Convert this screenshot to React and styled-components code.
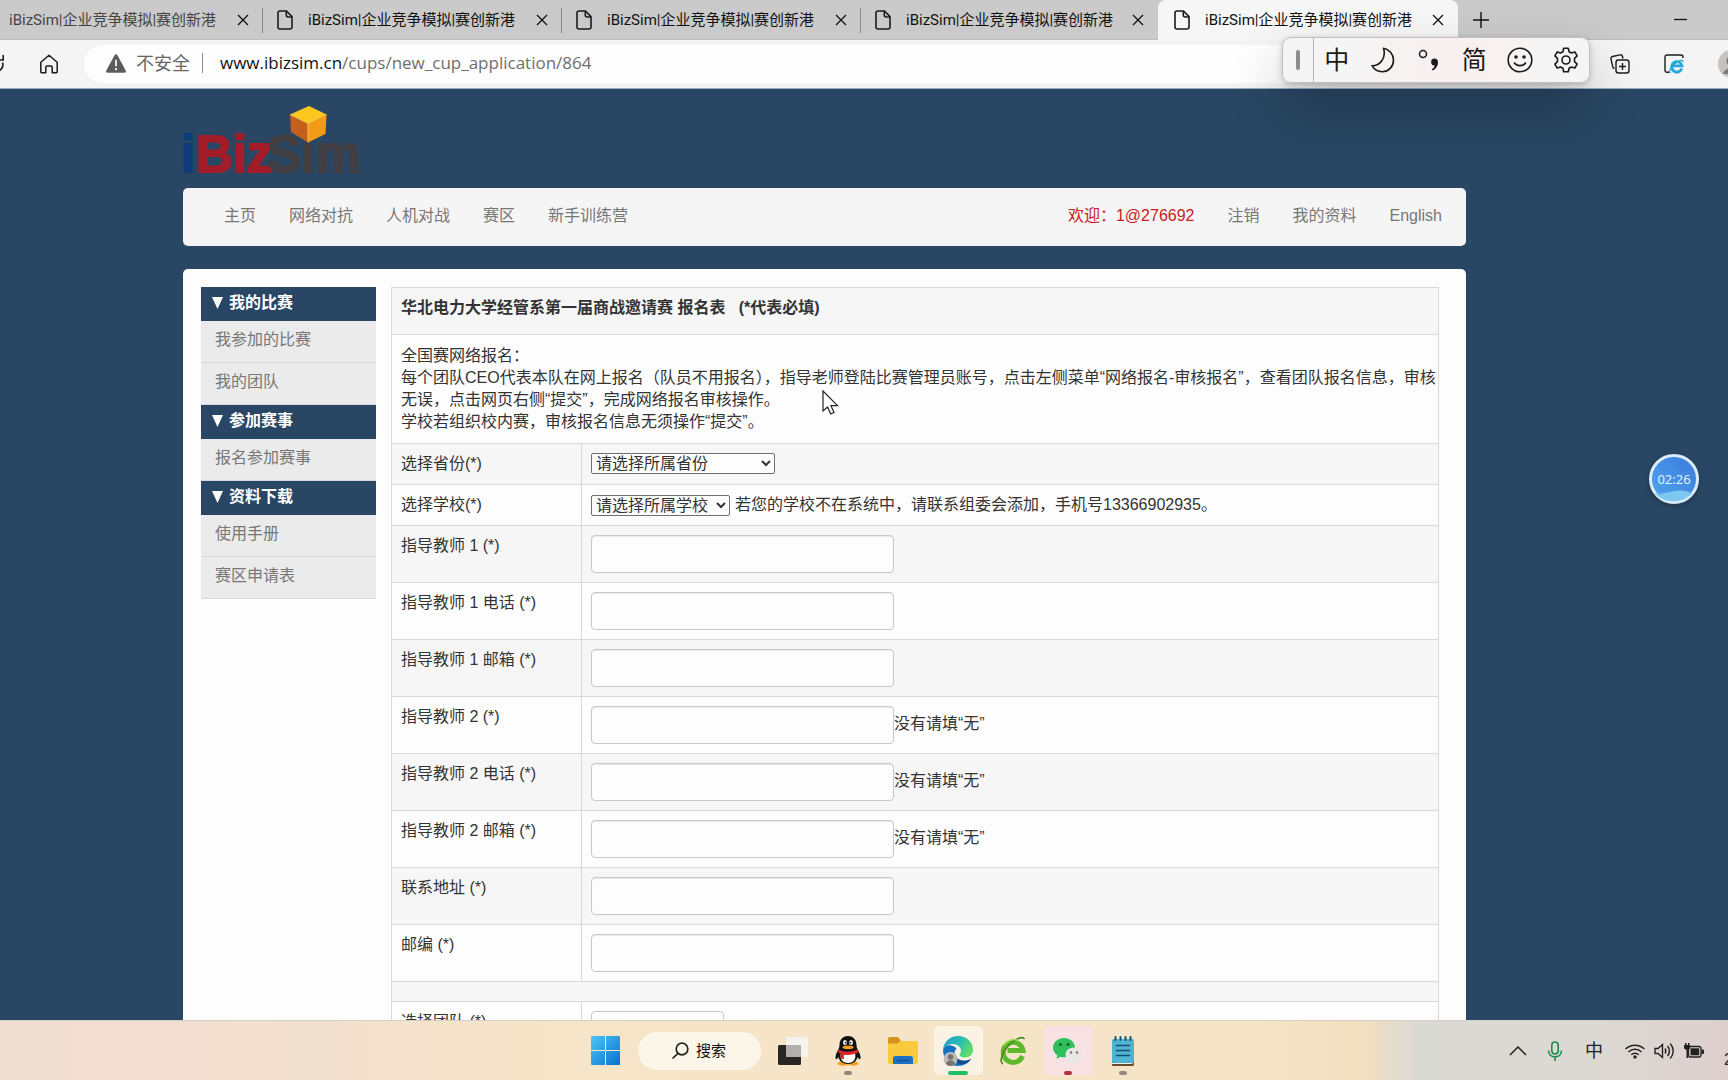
import styled, { createGlobalStyle } from "styled-components";

const TAB_TITLE = "iBizSim|企业竞争模拟|赛创新港";

const tabs = [
  { id: 1, first: true },
  { id: 2 },
  { id: 3 },
  { id: 4, last: true },
  { id: 5, active: true },
];

const leftLinks = ["主页", "网络对抗", "人机对战", "赛区", "新手训练营"];
const rightLinks = ["注销", "我的资料", "English"];

const menu = [
  { title: "我的比赛", items: ["我参加的比赛", "我的团队"] },
  { title: "参加赛事", items: ["报名参加赛事"] },
  { title: "资料下载", items: ["使用手册", "赛区申请表"] },
];

const fields = [
  { id: "teacher1", label: "指导教师 1 (*)" },
  { id: "teacher1_phone", label: "指导教师 1 电话 (*)" },
  { id: "teacher1_mail", label: "指导教师 1 邮箱 (*)" },
  { id: "teacher2", label: "指导教师 2 (*)", note: "没有请填“无”" },
  { id: "teacher2_phone", label: "指导教师 2 电话 (*)", note: "没有请填“无”" },
  { id: "teacher2_mail", label: "指导教师 2 邮箱 (*)", note: "没有请填“无”" },
  { id: "address", label: "联系地址 (*)" },
  { id: "zip", label: "邮编 (*)" },
];

const CloseIcon = () => (
  <svg width="12" height="12" viewBox="0 0 12 12" stroke="currentColor" strokeWidth="1.3">
    <path d="M1 1l10 10M11 1L1 11" />
  </svg>
);

const FileIcon = () => (
  <svg width="16" height="20" viewBox="0 0 16 20" fill="none" stroke="#1b1b1b" strokeWidth="1.6">
    <path d="M3 1h6.5L15 6.6V17a2 2 0 0 1-2 2H3a2 2 0 0 1-2-2V3a2 2 0 0 1 2-2z" />
    <path d="M9.3 1.2V5a2 2 0 0 0 2 2h3.5" />
  </svg>
);

const BrowserTabs = () => (
  <TabStrip role="tablist">
    {tabs.map((tab) => (
      <Tab
        key={tab.id}
        role="tab"
        aria-selected={!!tab.active}
        $active={tab.active}
        $first={tab.first}
        $last={tab.last}
      >
        {!tab.first && <FileIcon />}
        <TabTitle $dim={tab.first}>{TAB_TITLE}</TabTitle>
        <IconButton aria-label="关闭标签页">
          <CloseIcon />
        </IconButton>
      </Tab>
    ))}
    <NewTab aria-label="新建标签页">
      <svg width="18" height="18" viewBox="0 0 18 18" stroke="#111" strokeWidth="1.4">
        <path d="M9 1v16M1 9h16" />
      </svg>
    </NewTab>
    <Minimize aria-label="最小化">
      <svg width="13" height="3" viewBox="0 0 13 3" stroke="#111" strokeWidth="1.3">
        <path d="M0 1.5h13" />
      </svg>
    </Minimize>
  </TabStrip>
);

const BrowserToolbar = () => (
  <Toolbar>
    <IconButton aria-label="刷新">
      <svg width="5" height="20" viewBox="0 0 5 20" fill="none" stroke="#1b1b1b" strokeWidth="1.6">
        <path d="M3.2 1v5H0M2.500 8.500c1 3.500-.5 6.500-3 8" />
      </svg>
    </IconButton>
    <HomeButton aria-label="主页">
      <svg width="20" height="20" viewBox="0 0 20 20" fill="none" stroke="#1b1b1b" strokeWidth="1.5" strokeLinejoin="round">
        <path d="M1.8 8.3 10 1.3l8.200 7V18a.8.8 0 0 1-.8.8h-4.200v-5.500a1.200 1.200 0 0 0-1.200-1.200H8a1.200 1.200 0 0 0-1.200 1.200v5.500H2.600a.8.8 0 0 1-.8-.8z" />
      </svg>
    </HomeButton>
    <AddressBar>
      <svg width="20" height="19" viewBox="0 0 20 19">
        <path d="M8.7 1a1.500 1.500 0 0 1 2.600 0l8.400 15.500a1.500 1.500 0 0 1-1.300 2.300H1.600a1.500 1.500 0 0 1-1.300-2.300z" fill="#5b5b5b" />
        <path d="M10 5.800v6.400" stroke="#fff" strokeWidth="1.7" />
        <circle cx="10" cy="15.200" r="1.1" fill="#fff" />
      </svg>
      <Insecure>不安全</Insecure>
      <Url>
        <b>www.ibizsim.cn</b>/cups/new_cup_application/864
      </Url>
    </AddressBar>
    <ToolbarRight>
      <IconButton aria-label="集锦">
        <svg width="20" height="20" viewBox="0 0 20 20" fill="none" stroke="#1b1b1b" strokeWidth="1.4">
          <path d="M4.500 14.500 3 13.800 1 5a2 2 0 0 1 1.500-2.500L10 .9A2 2 0 0 1 12.500 2.500l.5 2" />
          <rect x="6" y="6" width="13" height="13" rx="2.5" />
          <path d="M12.500 9v7M9 12.500h7" />
        </svg>
      </IconButton>
      <IconButton aria-label="IE 模式">
        <svg width="20" height="20" viewBox="0 0 20 20" fill="none">
          <path d="M5 18.300H3a2 2 0 0 1-2-2V3a2 2 0 0 1 2-2h14a2 2 0 0 1 2 2v1" stroke="#1b1b1b" strokeWidth="1.4" />
          <path d="M17.800 14.500A5.200 5.200 0 1 1 18 11.800H8.800" stroke="#27a9d8" strokeWidth="2.8" />
          <path d="M7 18.500c-3 .5-1-4.500 3-8s9.500-6 9-2.500" stroke="#27a9d8" strokeWidth="1.2" />
        </svg>
      </IconButton>
      <IconButton aria-label="用户">
        <svg width="10" height="28" viewBox="0 0 10 28">
          <circle cx="14" cy="14" r="14" fill="#c6c2bf" />
          <circle cx="14" cy="11" r="5.5" fill="#7c7673" />
          <path d="M5 24c1-8 17-8 18 0z" fill="#7c7673" />
        </svg>
      </IconButton>
    </ToolbarRight>
  </Toolbar>
);

const ImeBar = () => (
  <Ime>
    <ImeHandle />
    <ImeButton>中</ImeButton>
    <ImeButton aria-label="半角">
      <svg width="24" height="26" viewBox="0 0 24 26" fill="none" stroke="#1a1a1a" strokeWidth="1.6" strokeLinejoin="round">
        <path d="M12.500 1.200c5.500 1 10 6 10 12 0 6.500-5 11.500-11 11.500-4.500 0-8.500-2.300-10.500-6 8 0 14.500-7.500 11.500-17.500z" />
      </svg>
    </ImeButton>
    <ImeButton aria-label="中文标点">
      <svg width="22" height="24" viewBox="0 0 22 24">
        <circle cx="5" cy="6" r="3.5" fill="none" stroke="#1a1a1a" strokeWidth="1.5" />
        <path d="M16.500 10.500a3.500 3.500 0 0 1 3.500 3.700c0 4-2.500 7-5.500 8.300l-.7-1.200c1.700-1 2.800-2.300 3-3.800a3.500 3.500 0 0 1-.3-7z" fill="#1a1a1a" />
      </svg>
    </ImeButton>
    <ImeButton>简</ImeButton>
    <ImeButton aria-label="表情">
      <svg width="26" height="26" viewBox="0 0 26 26" fill="none" stroke="#1a1a1a" strokeWidth="1.6">
        <circle cx="13" cy="13" r="11.8" />
        <path d="M7.500 16c2.300 3.500 8.700 3.500 11 0" strokeLinecap="round" />
        <circle cx="9" cy="10" r="1" fill="#1a1a1a" />
        <circle cx="17" cy="10" r="1" fill="#1a1a1a" />
      </svg>
    </ImeButton>
    <ImeButton aria-label="设置">
      <svg width="26" height="26" viewBox="0 0 26 26" fill="none" stroke="#1a1a1a" strokeWidth="1.6" strokeLinejoin="round">
        <path d="M10.700 1.300h4.600l.8 3.400 2.300 1.300 3.400-1.100 2.300 4-2.600 2.500v3.200l2.600 2.500-2.300 4-3.400-1.100-2.300 1.300-.8 3.400h-4.600l-.8-3.400L7.600 20l-3.400 1.100-2.300-4 2.600-2.500v-3.200L1.900 8.900l2.300-4L7.600 6l2.300-1.300z" />
        <circle cx="13" cy="13" r="4" />
      </svg>
    </ImeButton>
  </Ime>
);

const Logo = () => (
  <LogoLink href="#" aria-label="iBizSim">
    <svg width="200" height="84" viewBox="-4 0 200 84">
      <g fontFamily="Liberation Sans, sans-serif" fontWeight="bold" fontSize="51" strokeWidth="2">
        <text x="-2" y="68" fill="#0d3c78" stroke="#0d3c78">i</text>
        <text x="13" y="68" fill="#a31d28" stroke="#a31d28">Biz</text>
        <text x="84" y="68" fill="#413f43" stroke="#413f43">Sim</text>
      </g>
      <path d="M107 10.500 126 2l17.500 8.500L125 19.500z" fill="#fcc61e" />
      <path d="M107 10.500 125 19.500V38.500L108 28z" fill="#c4601b" />
      <path d="M143.500 10.500 125 19.500v19L142.500 30z" fill="#f39a16" />
      <path d="M107 10.500 125 19.500l18.500-9M125 19.500v19" fill="none" stroke="#fbd25a" strokeWidth="0.8" />
    </svg>
  </LogoLink>
);

const SiteNav = () => (
  <NavBar>
    <NavGroup>
      {leftLinks.map((text) => (
        <NavLink key={text} href="#">
          {text}
        </NavLink>
      ))}
    </NavGroup>
    <NavGroup>
      <Welcome>欢迎：1@276692</Welcome>
      {rightLinks.map((text) => (
        <NavLink key={text} href="#">
          {text}
        </NavLink>
      ))}
    </NavGroup>
  </NavBar>
);

const SideMenu = () => (
  <Sidebar>
    {menu.map((group) => (
      <section key={group.title}>
        <MenuTitle>
          <svg width="11" height="12" viewBox="0 0 11 12">
            <path d="M0 0h11L5.500 12z" fill="#fff" />
          </svg>
          {group.title}
        </MenuTitle>
        {group.items.map((item) => (
          <MenuItem key={item} href="#">
            {item}
          </MenuItem>
        ))}
      </section>
    ))}
  </Sidebar>
);

const ApplicationForm = () => (
  <FormTable>
    <colgroup>
      <LabelCol />
      <col />
    </colgroup>
    <tbody>
      <tr>
        <TitleCell colSpan={2}>
          华北电力大学经管系第一届商战邀请赛 报名表 &nbsp; (*代表必填)
        </TitleCell>
      </tr>
      <tr>
        <NoticeCell colSpan={2}>
          全国赛网络报名：
          <br />
          每个团队CEO代表本队在网上报名（队员不用报名），指导老师登陆比赛管理员账号，点击左侧菜单“网络报名-审核报名”，查看团队报名信息，审核
          无误，点击网页右侧“提交”，完成网络报名审核操作。
          <br />
          学校若组织校内赛，审核报名信息无须操作“提交”。
        </NoticeCell>
      </tr>
      <tr>
        <Cell>
          <label htmlFor="province">选择省份(*)</label>
        </Cell>
        <Cell>
          <FieldLine>
            <PlainSelect id="province" $width={184}>
              <option>请选择所属省份</option>
            </PlainSelect>
          </FieldLine>
        </Cell>
      </tr>
      <tr>
        <Cell>
          <label htmlFor="school">选择学校(*)</label>
        </Cell>
        <Cell>
          <FieldLine $gap={5}>
            <PlainSelect id="school" $width={139}>
              <option>请选择所属学校</option>
            </PlainSelect>
            若您的学校不在系统中，请联系组委会添加，手机号13366902935。
          </FieldLine>
        </Cell>
      </tr>
      {fields.map((field) => (
        <tr key={field.id}>
          <Cell>
            <label htmlFor={field.id}>{field.label}</label>
          </Cell>
          <Cell>
            <FieldLine>
              <TextInput id={field.id} type="text" />
              {field.note && <Note>{field.note}</Note>}
            </FieldLine>
          </Cell>
        </tr>
      ))}
      <tr>
        <SpacerCell colSpan={2} />
      </tr>
      <tr>
        <Cell>
          <label htmlFor="team">选择团队 (*)</label>
        </Cell>
        <Cell>
          <TeamSelect id="team" />
        </Cell>
      </tr>
    </tbody>
  </FormTable>
);

const Taskbar = () => (
  <Bar>
    <span />
    <Apps>
      <AppButton aria-label="开始">
        <svg width="29" height="29" viewBox="0 0 29 29">
          <defs>
            <linearGradient id="win" x1="0" y1="0" x2="1" y2="1">
              <stop offset="0" stopColor="#4cc8f6" />
              <stop offset="1" stopColor="#0a6fd0" />
            </linearGradient>
          </defs>
          <path d="M1 0h13v14H0V1a1 1 0 0 1 1-1zM15 0h13a1 1 0 0 1 1 1v13H15zM0 15h14v14H1a1 1 0 0 1-1-1zM15 15h14v13a1 1 0 0 1-1 1H15z" fill="url(#win)" />
        </svg>
      </AppButton>
      <SearchButton>
        <svg width="17" height="17" viewBox="0 0 17 17" fill="none" stroke="#222" strokeWidth="1.7">
          <circle cx="10" cy="7" r="5.8" />
          <path d="M6 11.300 1 16" strokeLinecap="round" />
        </svg>
        搜索
      </SearchButton>
      <AppButton aria-label="任务视图">
        <svg width="30" height="28" viewBox="0 0 30 28">
          <rect x="0" y="8" width="23" height="20" rx="1.5" fill="#272625" />
          <rect x="8" y="0" width="22" height="20" rx="1.5" fill="#f5f3f0" />
          <path d="M8 8h15v12H9.500A1.500 1.500 0 0 1 8 18.500z" fill="#b2b0ad" />
        </svg>
      </AppButton>
      <AppButton aria-label="QQ" $mark="#94887a">
        <svg width="26" height="30" viewBox="0 0 26 30">
          <ellipse cx="8" cy="27.5" rx="5.5" ry="2.2" fill="#f4a01c" />
          <ellipse cx="18" cy="27.5" rx="5.5" ry="2.2" fill="#f4a01c" />
          <path d="M13 0c5.500 0 8.500 4 8.500 9 0 2 .5 3 1.500 5 1.500 3 3 6 2.500 8.500-.5 1.500-2 .5-3-1.500-.8 4-4 7-9.500 7s-8.700-3-9.500-7c-1 2-2.500 3-3 1.500C0 20 1.500 17 3 14c1-2 1.500-3 1.500-5C4.500 4 7.500 0 13 0z" fill="#111" />
          <path d="M6 17h14c1.500 6-1.500 10-7 10s-8.500-4-7-10z" fill="#fff" />
          <ellipse cx="10" cy="6.5" rx="1.9" ry="2.6" fill="#fff" />
          <ellipse cx="16" cy="6.5" rx="1.9" ry="2.6" fill="#fff" />
          <circle cx="10.5" cy="6.7" r=".9" fill="#111" />
          <circle cx="15.5" cy="6.7" r=".9" fill="#111" />
          <ellipse cx="13" cy="11.3" rx="5.5" ry="1.9" fill="#f4a01c" />
          <path d="M3.500 13.500c6 3 13 3 19 0l.8 3c-3 1.500-7 2.500-10.300 2.500-1.500 0-3-.1-4-.3l-.2 4.500-3.300-.6.500-4.800-2.800-1.300z" fill="#e0262b" />
        </svg>
      </AppButton>
      <AppButton aria-label="文件资源管理器">
        <svg width="30" height="28" viewBox="0 0 30 28">
          <path d="M0 2a2 2 0 0 1 2-2h8l3 4h-1l-2 3H0z" fill="#d4931a" />
          <path d="M0 6.500h9.500L12.500 4H28a2 2 0 0 1 2 2v19a2 2 0 0 1-2 2H2a2 2 0 0 1-2-2z" fill="#f9c93e" />
          <path d="M5 27v-5.500A2.500 2.500 0 0 1 7.500 19h15a2.500 2.500 0 0 1 2.500 2.500V27z" fill="#1f6fc4" />
          <path d="M9 23.500h12" stroke="#174f96" strokeWidth="1.5" />
        </svg>
      </AppButton>
      <AppButton aria-label="Microsoft Edge" $tile="#faf3e3" $mark="#1fc068" $wide>
        <svg width="32" height="32" viewBox="0 0 32 32">
          <defs>
            <linearGradient id="edgeTop" x1="0" y1="0" x2="1" y2="0.5">
              <stop offset="0" stopColor="#2295cf" />
              <stop offset="0.6" stopColor="#2dc0b0" />
              <stop offset="1" stopColor="#5fdc69" />
            </linearGradient>
          </defs>
          <path d="M1 15c0 9 6.500 16 15 16 6 0 10.500-3 13-7-2.500 1.500-4.500 1.800-7 1.800-6 0-9.500-3.300-9.500-7.300 0-2 .7-3.500 2-5C12 10 3 8 1 15z" fill="#1572c0" />
          <path d="M12.500 18.500c-1 7 3 11.500 9 10.500 3.500-.7 6-2.500 7.500-5-8 4-15 .5-16.500-5.500z" fill="#134b91" />
          <path d="M16 1C8 1 1.500 7 1 15c2-4 5.500-6 9.500-6 5 0 8.500 3 8.500 7 0 2-1.500 3-1.500 4s2 2.500 5.500 2.500c4.500 0 8-3 8-8C31 7 24.500 1 16 1z" fill="url(#edgeTop)" />
          <circle cx="8.5" cy="24" r="7" fill="#bdbab6" />
          <circle cx="8.5" cy="22" r="2.8" fill="#77726e" />
          <path d="M4 29c.5-5 8.500-5 9 0-2 2.500-7 2.500-9 0z" fill="#77726e" />
        </svg>
      </AppButton>
      <AppButton aria-label="360安全浏览器">
        <svg width="28" height="30" viewBox="0 0 28 30" fill="none">
          <path d="M23.500 20A10 10 0 1 1 24 14.500H8.500" stroke="#5fb82c" strokeWidth="5" />
          <path d="M4 28c-4-2-1-12 6-19S24 0 25.500 3" stroke="#3c8c26" strokeWidth="1.6" />
          <path d="M4.500 9.500C8 4 14 2.500 18 4" stroke="#a9de5b" strokeWidth="1.4" />
        </svg>
      </AppButton>
      <AppButton aria-label="微信" $tile="#f8e2e4" $mark="#b0323a">
        <svg width="30" height="26" viewBox="0 0 30 26">
          <path d="M11 0c6 0 11 4.300 11 9.700s-5 9.600-11 9.600c-1.300 0-2.600-.2-3.700-.6L3.500 21l.8-3.800C1.600 15.500 0 12.700 0 9.700 0 4.300 5 0 11 0z" fill="#2dbf5c" />
          <circle cx="7.5" cy="6.5" r="1.5" fill="#145f2d" />
          <circle cx="15" cy="6.5" r="1.5" fill="#145f2d" />
          <path d="M21 9.500c4.800 0 8.500 3.300 8.500 7.300 0 2.300-1.200 4.300-3 5.700l.5 3-3-1.700c-1 .3-2 .4-3 .4-4.700 0-8.500-3.300-8.500-7.400s3.800-7.300 8.500-7.300z" fill="#e9e6e6" />
          <circle cx="18" cy="14.5" r="1.2" fill="#777" />
          <circle cx="24" cy="14.5" r="1.2" fill="#777" />
        </svg>
      </AppButton>
      <AppButton aria-label="记事本" $mark="#94887a">
        <svg width="22" height="30" viewBox="0 0 22 30">
          <path d="M0 26h22v2.500a1.500 1.500 0 0 1-1.500 1.500h-19A1.500 1.500 0 0 1 0 28.500z" fill="#6b4a2c" />
          <rect x="0" y="3" width="22" height="24" rx="1.5" fill="#4fb4d4" />
          <path d="M0 27h22l-3 1H0z" fill="#f4efe6" />
          <g stroke="#17506e" strokeWidth="2" strokeLinecap="round">
            <path d="M3.500 1v3M8.500 1v3M13.500 1v3M18.500 1v3" />
            <path d="M4.500 9.500h13M4.500 14.500h13M4.500 19.500h13" strokeWidth="1.7" />
          </g>
        </svg>
      </AppButton>
    </Apps>
    <Tray>
      <svg width="18" height="10" viewBox="0 0 18 10" fill="none" stroke="#222" strokeWidth="1.5">
        <path d="M1 9l8-8 8 8" />
      </svg>
      <svg width="16" height="20" viewBox="0 0 16 20" fill="none" stroke="#1f8a50" strokeWidth="1.6">
        <rect x="4.8" y="1" width="6.4" height="12" rx="3.2" />
        <path d="M1.500 9.500c0 4 2.800 6.300 6.500 6.300s6.500-2.300 6.500-6.300M8 16v4" />
      </svg>
      <ImeState>中</ImeState>
      <TrayStatus>
        <svg width="20" height="16" viewBox="0 0 20 16" fill="none" stroke="#222" strokeWidth="1.5">
          <path d="M.6 6a13.500 13.500 0 0 1 18.800 0M3.500 9a9.300 9.300 0 0 1 13 0M6.300 11.800a5.300 5.300 0 0 1 7.400 0" />
          <circle cx="10" cy="14" r="1.7" fill="#222" stroke="none" />
        </svg>
        <svg width="21" height="18" viewBox="0 0 21 18" fill="none" stroke="#222" strokeWidth="1.4">
          <path d="M1 6.500h3l4.500-4v13L4 11.500H1zM11 6.500c1 1.500 1 3.500 0 5M13.500 4c2.300 3 2.300 7 0 10M16.200 1.500c4 4.500 4 10.500 0 15" />
        </svg>
        <svg width="20" height="16" viewBox="0 0 20 16">
          <path d="M1 0h1.500v2H4V0h1.500v2H6v3.500L4.200 7v8H2.500V7L0 5.500V2h1z" fill="#222" />
          <rect x="4.5" y="3.5" width="12.5" height="10.5" rx="2" fill="none" stroke="#222" strokeWidth="1.3" />
          <rect x="6.5" y="5.3" width="8.7" height="7" fill="#222" />
          <path d="M17.500 6.500H19a1 1 0 0 1 1 1v2.500a1 1 0 0 1-1 1h-1.500z" fill="#222" />
        </svg>
      </TrayStatus>
      <TrayDate>2</TrayDate>
    </Tray>
  </Bar>
);

const App = () => {
  return (
    <Desktop lang="zh-CN">
      <GlobalStyle />
      <BrowserTabs />
      <BrowserToolbar />
      <Page>
        <Logo />
        <SiteNav />
        <Panel>
          <SideMenu />
          <ApplicationForm />
        </Panel>
      </Page>
      <Taskbar />
      <ImeBar />
      <Timer>
        <svg width="50" height="50" viewBox="0 0 50 50">
          <defs>
            <linearGradient id="ball" x1="0" y1="1" x2="1" y2="0">
              <stop offset="0" stopColor="#4fa8f0" />
              <stop offset="1" stopColor="#3b78dc" />
            </linearGradient>
          </defs>
          <circle cx="25" cy="25" r="23.5" fill="url(#ball)" stroke="#dcebfa" strokeWidth="3" />
          <path d="M6 39c7 2 13-1 20-2s11 0 17 2c-8 11-29 11-37 0z" fill="#7cc8f0" />
        </svg>
        <span>02:26</span>
      </Timer>
      <Pointer width="17" height="26" viewBox="0 0 17 26">
        <path d="M1 1v20l4.500-4 3.200 7 3.300-1.500-3-6.800h6.500z" fill="#fff" stroke="#222" strokeWidth="1.2" />
      </Pointer>
    </Desktop>
  );
};

const GlobalStyle = createGlobalStyle`
  * {
    box-sizing: border-box;
  }
  body {
    margin: 0;
    font-family: "Liberation Sans", "Noto Sans CJK SC", sans-serif;
    font-size: 16px;
    line-height: 22px;
    color: #333;
  }
  button {
    font: inherit;
    color: inherit;
    padding: 0;
    border: 0;
    background: none;
  }
  svg {
    display: block;
    flex: none;
  }
`;

const Desktop = styled.div`
  position: relative;
  display: flex;
  flex-direction: column;
  height: 100vh;
  overflow: hidden;
`;

const TabStrip = styled.div`
  display: flex;
  height: 40px;
  background: #cacaca;
  border-bottom: 1px solid #bdbdbd;
  font-family: Roboto, "Noto Sans CJK SC", sans-serif;
  font-size: 15px;
`;

const Tab = styled.div`
  display: flex;
  align-items: center;
  gap: 15px;
  flex: 0 1
    ${(props) =>
      props.$first ? 263 : props.$last ? 297 : props.$active ? 300 : 299}px;
  height: 40px;
  padding: 0 14px 0 ${(props) => (props.$first ? 9 : props.$active ? 16 : 14)}px;
  background: ${(props) =>
    props.$active
      ? "#f6f6f6"
      : props.$last
      ? "none"
      : "linear-gradient(#8a8a8a, #8a8a8a) right 8px / 1px 25px no-repeat"};
  border-radius: ${(props) => (props.$active ? "8px 8px 0 0" : 0)};
  color: #111;
`;

const TabTitle = styled.span`
  flex: 1;
  white-space: nowrap;
  overflow: hidden;
  color: ${(props) => (props.$dim ? "#444" : "#111")};
`;

const IconButton = styled.button`
  display: flex;
  align-items: center;
  cursor: pointer;
`;

const NewTab = styled(IconButton)`
  padding-left: 14px;
`;

const Minimize = styled(IconButton)`
  margin-left: auto;
  padding-right: 41px;
`;

const Toolbar = styled.div`
  display: flex;
  align-items: center;
  height: 49px;
  background: #f5f4f5;
  border-bottom: 1px solid #9aacc0;
`;

const HomeButton = styled(IconButton)`
  margin: 0 25px 0 34px;
`;

const AddressBar = styled.div`
  display: flex;
  align-items: center;
  flex: 1;
  height: 38px;
  margin-right: 30px;
  padding: 0 0 2px 22px;
  border-radius: 19px;
  background: #fefefe;
  font-family: "Open Sans", "Noto Sans CJK SC", sans-serif;
`;

const Insecure = styled.span`
  margin-left: 10px;
  padding-right: 12px;
  border-right: 1px solid #8b8b8b;
  font-size: 18px;
  line-height: 20px;
  color: #666;
`;

const Url = styled.span`
  margin-left: 17px;
  font-size: 17px;
  color: #6f6f6f;
  b {
    font-weight: normal;
    color: #111;
  }
`;

const ToolbarRight = styled.div`
  display: flex;
  align-items: center;
  gap: 34px;
`;

const Page = styled.main`
  flex: 1;
  min-height: 0;
  overflow: hidden;
  padding: 0 262px 0 183px;
  background: #294764;
`;

const LogoLink = styled.a`
  display: block;
  width: 200px;
  margin-left: -4px;
  padding-top: 15px;
`;

const NavBar = styled.nav`
  display: flex;
  justify-content: space-between;
  align-items: center;
  height: 58px;
  padding: 0 24px 2px 41px;
  border-radius: 5px;
  background: #f5f5f5;
`;

const NavGroup = styled.div`
  display: flex;
  gap: 33px;
  white-space: nowrap;
`;

const NavLink = styled.a`
  color: #777;
  text-decoration: none;
`;

const Welcome = styled.span`
  color: #c8201f;
`;

const Panel = styled.div`
  display: flex;
  align-items: flex-start;
  gap: 15px;
  margin-top: 23px;
  padding: 18px 27px 20px 18px;
  border-radius: 5px;
  background: #fdfdfd;
`;

const Sidebar = styled.aside`
  flex: 0 0 175px;
`;

const MenuTitle = styled.h2`
  display: flex;
  align-items: center;
  gap: 6px;
  height: 34px;
  margin: 0;
  padding: 0 0 3px 11px;
  font-size: 16px;
  color: #fff;
  background: #294764;
`;

const MenuItem = styled.a`
  display: block;
  height: 42px;
  padding: 8px 14px;
  border-bottom: 1px solid #d9d9d9;
  color: #777;
  background: #ebebeb;
  text-decoration: none;
`;

const FormTable = styled.table`
  flex: 1;
  min-width: 0;
  table-layout: fixed;
  border-collapse: collapse;
  tr:nth-child(odd) {
    background: #f6f6f6;
  }
`;

const LabelCol = styled.col`
  width: 190px;
`;

const Cell = styled.td`
  padding: 9px;
  border: 1px solid #d8d8d8;
  vertical-align: top;
`;

const TitleCell = styled(Cell)`
  padding-bottom: 15px;
  font-weight: bold;
`;

const NoticeCell = styled(Cell)`
  padding: 10px 0 10px 9px;
`;

const SpacerCell = styled(Cell)`
  height: 20px;
  padding: 0;
`;

const FieldLine = styled.div`
  display: flex;
  align-items: center;
  gap: ${(props) => props.$gap || 0}px;
`;

const Note = styled.span`
  padding-bottom: 3px;
`;

const PlainSelect = styled.select`
  width: ${(props) => props.$width}px;
  height: 21px;
  padding: 0;
  border: 1px solid #6f6f6f;
  border-radius: 2px;
  font: inherit;
  line-height: 18px;
  color: #333;
  background-color: #fdfdfd;
`;

const TextInput = styled.input`
  width: 303px;
  height: 38px;
  padding: 6px 10px;
  border: 1px solid #c8c8c8;
  border-radius: 4px;
  box-shadow: inset 0 1px 1px rgba(0, 0, 0, 0.08);
  background: #fdfdfd;
  font: inherit;
`;

const TeamSelect = styled.select`
  display: block;
  width: 133px;
  height: 38px;
  border: 1px solid #c8c8c8;
  border-radius: 4px;
  background: #fdfdfd;
  appearance: none;
`;

const Bar = styled.footer`
  display: grid;
  grid-template-columns: 1fr auto 1fr;
  align-items: center;
  height: 60px;
  border-top: 1px solid #d5cfc6;
  background: linear-gradient(
    90deg,
    #f1ded3 0%,
    #f2e0cf 18%,
    #f6e5c8 32%,
    #f5e4c6 72%,
    #f2dfc0 79%,
    #dadad5 82%,
    #dcd9d3 92%,
    #decfcf 100%
  );
`;

const Apps = styled.div`
  display: flex;
  align-items: center;
  gap: 6px;
`;

const AppButton = styled.button`
  position: relative;
  display: flex;
  align-items: center;
  justify-content: center;
  width: 49px;
  height: 49px;
  border-radius: 5px;
  background: ${(props) => props.$tile || "none"};
  &::after {
    content: "";
    position: absolute;
    bottom: 0;
    width: ${(props) => (props.$wide ? 20 : 8)}px;
    height: 4px;
    border-radius: 2px;
    background: ${(props) => props.$mark || "none"};
  }
`;

const SearchButton = styled.button`
  display: flex;
  align-items: center;
  justify-content: center;
  gap: 7px;
  width: 123px;
  height: 38px;
  margin: 0 2px;
  border-radius: 19px;
  background: #fcf5ea;
  font-size: 15px;
  color: #111;
`;

const Tray = styled.div`
  display: flex;
  align-items: center;
  justify-content: flex-end;
  gap: 20px;
`;

const ImeState = styled.span`
  margin: 0 2px;
  font-size: 18px;
  color: #222;
`;

const TrayStatus = styled.div`
  display: flex;
  align-items: center;
  gap: 9px;
`;

const TrayDate = styled.span`
  width: 4px;
  padding-top: 18px;
  overflow: hidden;
  color: #222;
`;

const Ime = styled.div`
  position: absolute;
  top: 37px;
  right: 138px;
  display: flex;
  align-items: center;
  width: 308px;
  height: 46px;
  border: 1px solid #c2c0c1;
  border-radius: 9px;
  background: linear-gradient(90deg, #f5f5f5 20%, #f9efef 55%, #f5f5f5 90%);
  box-shadow: 0 2px 6px rgba(0, 0, 0, 0.2), 0 28px 56px rgba(0, 0, 0, 0.24);
`;

const ImeHandle = styled.span`
  display: flex;
  align-items: center;
  justify-content: center;
  width: 31px;
  height: 44px;
  border-right: 1px solid #b5b5b5;
  &::before {
    content: "";
    width: 4px;
    height: 20px;
    border-radius: 2px;
    background: #8c8c8c;
  }
`;

const ImeButton = styled.button`
  display: flex;
  justify-content: center;
  align-items: center;
  width: 46px;
  height: 44px;
  font-size: 25px;
  color: #1a1a1a;
`;

const Timer = styled.div`
  position: absolute;
  top: 454px;
  right: 29px;
  display: grid;
  place-items: center;
  border-radius: 50%;
  box-shadow: 0 2px 6px rgba(0, 0, 0, 0.25);
  svg,
  span {
    grid-area: 1 / 1;
  }
  span {
    font-family: "Open Sans", sans-serif;
    font-size: 13px;
    color: #eaf6ff;
  }
`;

const Pointer = styled.svg`
  position: absolute;
  top: 390px;
  left: 822px;
`;

export default App;
